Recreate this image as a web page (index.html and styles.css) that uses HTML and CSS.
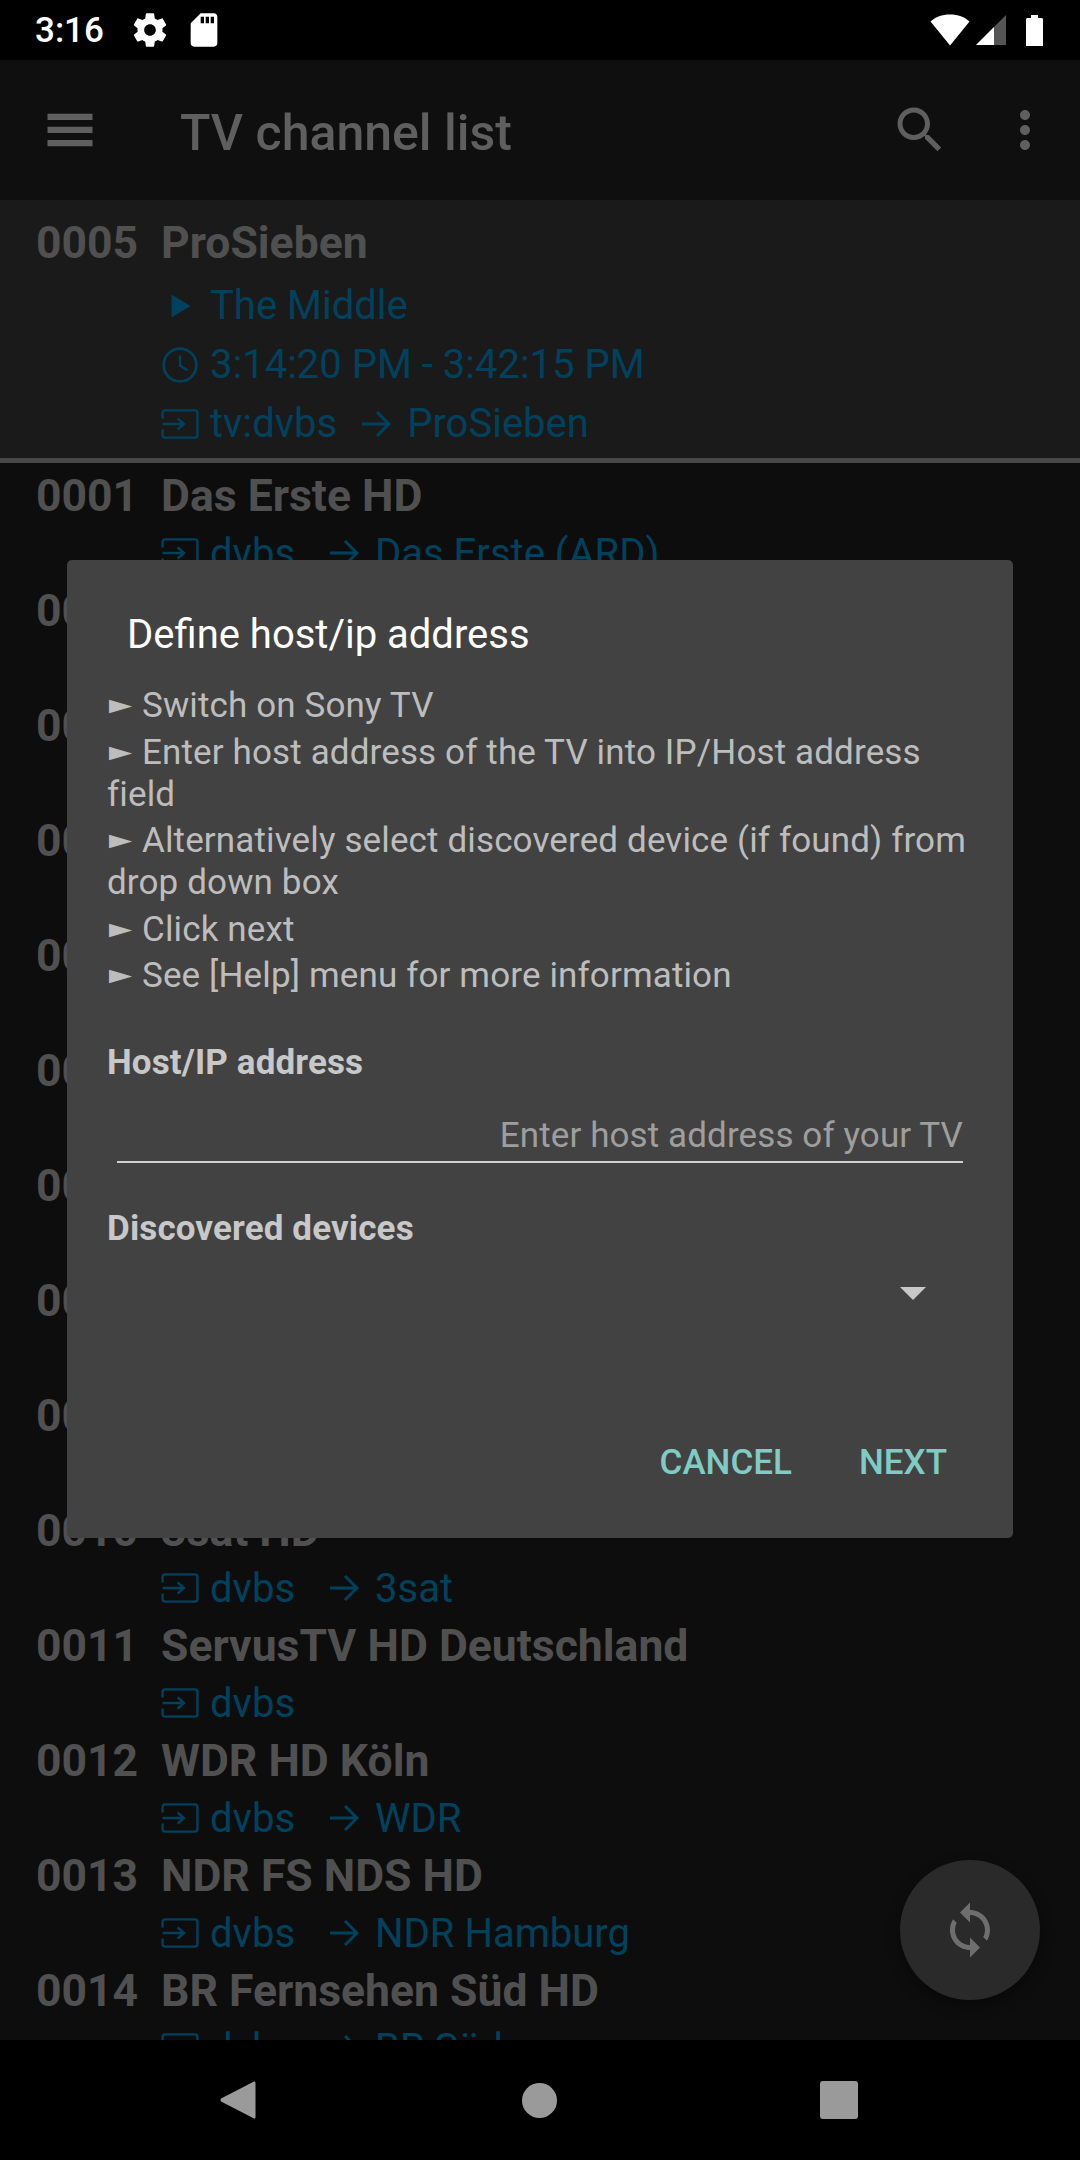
FILE: index.html
```html
<!DOCTYPE html>
<html>
<head>
    <title>TV channel list</title>
    <link rel="stylesheet" href="styles.css">
</head>
<body>
    <svg class="defs" width="0" height="0">
        <symbol id="input" viewBox="0 0 24 24">
            <path d="M1 8.5V5a1.6 1.6 0 0 1 1.6-1.6h18.8A1.6 1.6 0 0 1 23 5v14a1.6 1.6 0 0 1-1.6 1.6H2.600A1.600 1.600 0 0 1 1 19v-3.500M1 12h13.500M10.500 8.500l4 3.500-4 3.500" fill="none" stroke="currentColor" stroke-width="1.500"/>
        </symbol>
        <symbol id="arrow" viewBox="0 0 30 30">
            <path d="M1 15h27M16 3l12 12-12 12" fill="none" stroke="currentColor" stroke-width="3"/>
        </symbol>
    </svg>

    <div class="phone">
        <div class="statusbar">
            <span class="time">3:16</span>
            <svg class="st-icon gear" viewBox="0 0 24 24"><path fill="#fff" d="M19.430 12.980c.04-.32.07-.64.07-.98s-.03-.66-.07-.98l2.110-1.650c.19-.15.24-.42.12-.64l-2-3.460c-.12-.22-.39-.3-.61-.22l-2.490 1c-.52-.4-1.080-.73-1.690-.98l-.38-2.650C14.460 2.180 14.250 2 14 2h-4c-.25 0-.46.18-.49.42l-.38 2.650c-.61.25-1.170.59-1.690.98l-2.490-1c-.23-.09-.49 0-.61.22l-2 3.460c-.13.22-.07.49.12.64l2.110 1.650c-.04.32-.07.65-.07.98s.03.66.07.98l-2.110 1.650c-.19.15-.24.42-.12.64l2 3.460c.12.22.39.3.61.22l2.490-1c.52.4 1.080.73 1.690.98l.38 2.650c.03.24.24.42.49.42h4c.25 0 .46-.18.49-.42l.38-2.650c.61-.25 1.170-.59 1.690-.98l2.490 1c.23.09.49 0 .61-.22l2-3.460c.12-.22.07-.49-.12-.64l-2.110-1.650zM12 15.500c-1.930 0-3.500-1.570-3.500-3.500s1.570-3.500 3.500-3.500 3.500 1.570 3.500 3.500-1.570 3.500-3.500 3.500z"/></svg>
            <svg class="st-icon sd" viewBox="0 0 24 24"><path fill="#fff" d="M18 2h-8L4.020 8 4 20c0 1.100.9 2 2 2h12c1.100 0 2-.9 2-2V4c0-1.100-.9-2-2-2zm-6 6h-2V4h2v4zm3 0h-2V4h2v4zm3 0h-2V4h2v4z"/></svg>
            <div class="st-right">
                <svg class="wifi" viewBox="0 0 40 32"><path fill="#fff" d="M20 31.500 0.500 7.500C5.500 3 12 .5 20 .5s14.500 2.500 19.500 7z"/></svg>
                <svg class="signal" viewBox="0 0 30 30"><path fill="#555" d="M30 0v30H0z"/><path fill="#fff" d="M18 12v18H0z"/></svg>
                <svg class="battery" viewBox="0 0 17 31"><path fill="#fff" d="M5 0h7v3h3.500c.8 0 1.500.7 1.500 1.500V31H0V4.500C0 3.700.7 3 1.500 3H5z"/></svg>
            </div>
        </div>

        <div class="toolbar">
            <svg class="tb-icon" viewBox="0 0 24 24"><path d="M3 18.500h18v-2.500H3v2.500zm0-5.300h18v-2.500H3v2.500zm0-7.700v2.500h18V5.500H3z"/></svg>
            <span class="tb-title">TV channel list</span>
            <svg class="tb-icon tb-search" viewBox="0 0 24 24"><path d="M15.500 14h-.79l-.28-.27C15.410 12.590 16 11.110 16 9.500 16 5.910 13.090 3 9.500 3S3 5.910 3 9.500 5.910 16 9.500 16c1.610 0 3.090-.59 4.230-1.570l.27.28v.79l5 4.990L20.490 19l-4.990-5zm-6 0C7.010 14 5 11.990 5 9.500S7.010 5 9.500 5 14 7.010 14 9.500 11.990 14 9.500 14z"/></svg>
            <svg class="tb-icon tb-more" viewBox="0 0 24 24"><path d="M12 8c1.100 0 2-.9 2-2s-.9-2-2-2-2 .9-2 2 .9 2 2 2zm0 2c-1.100 0-2 .9-2 2s.9 2 2 2 2-.9 2-2-.9-2-2-2zm0 6c-1.100 0-2 .9-2 2s.9 2 2 2 2-.9 2-2-.9-2-2-2z"/></svg>
        </div>

        <div class="list">
            <div class="row row-current">
                <div class="row-title"><span class="num">0005</span><span>ProSieben</span></div>
                <div class="sub">
                    <svg class="sub-icon" viewBox="0 0 36 36"><path fill="currentColor" d="M10 7l18 11-18 11z"/></svg>
                    <span>The Middle</span>
                </div>
                <div class="sub">
                    <svg class="sub-icon" viewBox="0 0 36 36"><circle cx="18" cy="18" r="15.500" fill="none" stroke="currentColor" stroke-width="2.500"/><path d="M18 9v9.500l7 4.500" fill="none" stroke="currentColor" stroke-width="2.200"/></svg>
                    <span>3:14:20 PM - 3:42:15 PM</span>
                </div>
                <div class="sub">
                    <svg class="sub-icon"><use href="#input"/></svg>
                    <span>tv:dvbs</span>
                    <svg class="sub-arrow sub-arrow-near"><use href="#arrow"/></svg>
                    <span>ProSieben</span>
                </div>
            </div>

            <div class="row">
                <div class="row-title"><span class="num">0001</span><span>Das Erste HD</span></div>
                <div class="sub"><svg class="sub-icon"><use href="#input"/></svg><span>dvbs</span><svg class="sub-arrow"><use href="#arrow"/></svg><span>Das Erste (ARD)</span></div>
            </div>
            <div class="row">
                <div class="row-title"><span class="num">0002</span><span>ZDF HD</span></div>
                <div class="sub"><svg class="sub-icon"><use href="#input"/></svg><span>dvbs</span><svg class="sub-arrow"><use href="#arrow"/></svg><span>ZDF</span></div>
            </div>
            <div class="row">
                <div class="row-title"><span class="num">0003</span><span>RTL Television</span></div>
                <div class="sub"><svg class="sub-icon"><use href="#input"/></svg><span>dvbs</span><svg class="sub-arrow"><use href="#arrow"/></svg><span>RTL</span></div>
            </div>
            <div class="row">
                <div class="row-title"><span class="num">0004</span><span>SAT.1</span></div>
                <div class="sub"><svg class="sub-icon"><use href="#input"/></svg><span>dvbs</span><svg class="sub-arrow"><use href="#arrow"/></svg><span>SAT.1</span></div>
            </div>
            <div class="row">
                <div class="row-title"><span class="num">0005</span><span>ProSieben</span></div>
                <div class="sub"><svg class="sub-icon"><use href="#input"/></svg><span>dvbs</span><svg class="sub-arrow"><use href="#arrow"/></svg><span>ProSieben</span></div>
            </div>
            <div class="row">
                <div class="row-title"><span class="num">0006</span><span>VOX</span></div>
                <div class="sub"><svg class="sub-icon"><use href="#input"/></svg><span>dvbs</span><svg class="sub-arrow"><use href="#arrow"/></svg><span>VOX</span></div>
            </div>
            <div class="row">
                <div class="row-title"><span class="num">0007</span><span>kabel eins</span></div>
                <div class="sub"><svg class="sub-icon"><use href="#input"/></svg><span>dvbs</span><svg class="sub-arrow"><use href="#arrow"/></svg><span>kabel eins</span></div>
            </div>
            <div class="row">
                <div class="row-title"><span class="num">0008</span><span>arte HD</span></div>
                <div class="sub"><svg class="sub-icon"><use href="#input"/></svg><span>dvbs</span><svg class="sub-arrow"><use href="#arrow"/></svg><span>arte</span></div>
            </div>
            <div class="row">
                <div class="row-title"><span class="num">0009</span><span>phoenix HD</span></div>
                <div class="sub"><svg class="sub-icon"><use href="#input"/></svg><span>dvbs</span><svg class="sub-arrow"><use href="#arrow"/></svg><span>phoenix</span></div>
            </div>
            <div class="row">
                <div class="row-title"><span class="num">0010</span><span>3sat HD</span></div>
                <div class="sub"><svg class="sub-icon"><use href="#input"/></svg><span>dvbs</span><svg class="sub-arrow"><use href="#arrow"/></svg><span>3sat</span></div>
            </div>
            <div class="row">
                <div class="row-title"><span class="num">0011</span><span>ServusTV HD Deutschland</span></div>
                <div class="sub"><svg class="sub-icon"><use href="#input"/></svg><span>dvbs</span></div>
            </div>
            <div class="row">
                <div class="row-title"><span class="num">0012</span><span>WDR HD Köln</span></div>
                <div class="sub"><svg class="sub-icon"><use href="#input"/></svg><span>dvbs</span><svg class="sub-arrow"><use href="#arrow"/></svg><span>WDR</span></div>
            </div>
            <div class="row">
                <div class="row-title"><span class="num">0013</span><span>NDR FS NDS HD</span></div>
                <div class="sub"><svg class="sub-icon"><use href="#input"/></svg><span>dvbs</span><svg class="sub-arrow"><use href="#arrow"/></svg><span>NDR Hamburg</span></div>
            </div>
            <div class="row">
                <div class="row-title"><span class="num">0014</span><span>BR Fernsehen Süd HD</span></div>
                <div class="sub"><svg class="sub-icon"><use href="#input"/></svg><span>dvbs</span><svg class="sub-arrow"><use href="#arrow"/></svg><span>BR Süd</span></div>
            </div>

            <div class="fab">
                <svg viewBox="0 0 24 24"><path fill="#6e6e6e" d="M12 4V1L8 5l4 4V6c3.310 0 6 2.690 6 6 0 1.010-.25 1.970-.7 2.800l1.460 1.460C19.540 15.030 20 13.570 20 12c0-4.420-3.580-8-8-8zm0 14c-3.310 0-6-2.690-6-6 0-1.010.25-1.970.7-2.800L5.240 7.740C4.460 8.970 4 10.430 4 12c0 4.420 3.580 8 8 8v3l4-4-4-4v3z"/></svg>
            </div>
        </div>

        <div class="navbar">
            <svg class="nav-back" viewBox="0 0 36 40"><path d="M34 1.500c1 0 1.500.6 1.500 1.500v34c0 1-.5 1.500-1.500 1.500-.5 0-1-.3-1.400-.8L1 21.500c-.7-.9-.7-2.100 0-3L32.600 2.300c.4-.5.9-.8 1.400-.8z"/></svg>
            <span class="nav-home"></span>
            <span class="nav-recent"></span>
        </div>

        <div class="dialog">
            <h2 class="dlg-title">Define host/ip address</h2>
            <div class="dlg-text">
                <p><span class="bullet">►</span>Switch on Sony TV</p>
                <p><span class="bullet">►</span>Enter host address of the TV into IP/Host address field</p>
                <p><span class="bullet">►</span>Alternatively select discovered device (if found) from drop down box</p>
                <p><span class="bullet">►</span>Click next</p>
                <p><span class="bullet">►</span>See [Help] menu for more information</p>
            </div>
            <div class="dlg-label">Host/IP address</div>
            <div class="dlg-input">Enter host address of your TV</div>
            <div class="dlg-label dlg-label-2">Discovered devices</div>
            <div class="dlg-spinner"><span class="caret"></span></div>
            <div class="dlg-buttons">
                <span>CANCEL</span>
                <span>NEXT</span>
            </div>
        </div>
    </div>
</body>
</html>
```

FILE: styles.css
```css
body {
    margin: 0;
    background: #000;
    font-family: Roboto, "Liberation Sans", sans-serif;
}

.defs {
    position: absolute;
}

.phone {
    position: relative;
    width: 1080px;
    height: 2160px;
    display: flex;
    flex-direction: column;
    overflow: hidden;
    background: #0d0d0d;
}

/* status bar */
.statusbar {
    height: 60px;
    flex: none;
    display: flex;
    align-items: center;
    background: #000;
    padding: 0 37px 0 35px;
    box-sizing: border-box;
}

.time {
    color: #fff;
    font-size: 35px;
    font-weight: 500;
    width: 95px;
}

.st-icon {
    width: 40px;
    height: 40px;
}

.sd {
    margin-left: 14px;
}

.st-right {
    margin-left: auto;
    display: flex;
    align-items: center;
    gap: 6px;
}

.wifi {
    width: 40px;
    height: 32px;
}

.signal {
    width: 30px;
    height: 30px;
}

.battery {
    width: 17px;
    height: 31px;
    margin-left: 14px;
}

/* toolbar */
.toolbar {
    height: 140px;
    flex: none;
    display: flex;
    align-items: center;
    background: #0f0f0f;
    padding: 0 25px 0 40px;
    box-sizing: border-box;
}

.tb-icon {
    width: 60px;
    height: 60px;
    fill: #5f5f5f;
}

.tb-title {
    color: #5f5f5f;
    font-size: 50px;
    font-weight: 500;
    margin-left: 80px;
    padding-top: 5px;
}

.tb-search {
    margin-left: auto;
    margin-right: 45px;
}

/* channel list */
.list {
    position: relative;
    flex: 1;
    min-height: 0;
    overflow: hidden;
    color: #00425e;
}

.row {
    height: 115px;
    padding: 5px 0 0 36px;
    box-sizing: border-box;
}

.row-current {
    height: 263px;
    padding-top: 15px;
    background: #1a1a1a;
    border-bottom: 5px solid #484848;
}

.row-title {
    display: flex;
    height: 60px;
    line-height: 56px;
    color: #505050;
    font-size: 44.500px;
    font-weight: 700;
}

.row-current .row-title {
    height: 61px;
}

.num {
    width: 125px;
}

.sub {
    display: flex;
    align-items: center;
    height: 50px;
    margin-left: 125px;
    font-size: 40px;
}

.row-current .sub {
    height: 59px;
}

.sub-icon {
    width: 38px;
    height: 38px;
    margin: 0 11px 0 0;
    flex: none;
}

.sub-arrow {
    width: 30px;
    height: 30px;
    margin: 0 16px 0 34px;
    flex: none;
}

.sub-arrow-near {
    margin-left: 24px;
}

.fab {
    position: absolute;
    right: 40px;
    bottom: 40px;
    width: 140px;
    height: 140px;
    border-radius: 50%;
    background: #2a2a2a;
    box-shadow: 0 6px 14px rgba(0, 0, 0, 0.35);
    display: flex;
    align-items: center;
    justify-content: center;
}

.fab svg {
    width: 60px;
    height: 60px;
}

/* nav bar */
.navbar {
    position: relative;
    height: 120px;
    flex: none;
    background: #000;
    display: flex;
    align-items: center;
    padding-left: 220px;
    box-sizing: border-box;
}

.nav-back {
    width: 36px;
    height: 40px;
    fill: #9a9a9a;
}

.nav-home {
    width: 35px;
    height: 35px;
    margin-left: 266px;
    border-radius: 50%;
    background: #9a9a9a;
}

.nav-recent {
    width: 38px;
    height: 38px;
    margin-left: 263px;
    border-radius: 3px;
    background: #9a9a9a;
}

/* dialog */
.dialog {
    position: absolute;
    left: 67px;
    top: 560px;
    width: 946px;
    height: 978px;
    background: #424242;
    border-radius: 5px;
    box-sizing: border-box;
    padding: 50px 40px 0;
}

.dlg-title {
    margin: 0 0 0 20px;
    color: #fff;
    font-size: 40px;
    font-weight: 400;
    line-height: 50px;
}

.dlg-text {
    margin-top: 25px;
    color: #bdbdbd;
    font-size: 35px;
    line-height: 42px;
    letter-spacing: 0.13px;
}

.dlg-text p {
    margin: 0 0 4.500px;
}

.bullet {
    display: inline-block;
    width: 35px;
    text-indent: -5px;
    transform: scale(1.1, 0.65);
    transform-origin: left center;
}

.dlg-label {
    margin-top: 45px;
    color: #c8c8c8;
    font-size: 35px;
    font-weight: 700;
    line-height: 42px;
    letter-spacing: 0.13px;
}

.dlg-label-2 {
    margin-top: 45px;
}

.dlg-input {
    margin: 30px 10px 0 10px;
    padding-bottom: 3px;
    border-bottom: 2px solid #d0d0d0;
    color: #9e9e9e;
    font-size: 35px;
    line-height: 44px;
    letter-spacing: 0.1px;
    text-align: right;
}

.dlg-spinner {
    display: flex;
    justify-content: flex-end;
    padding: 37px 47px 0 0;
}

.caret {
    width: 0;
    height: 0;
    border-left: 13px solid transparent;
    border-right: 13px solid transparent;
    border-top: 13px solid #c8c8c8;
}

.dlg-buttons {
    display: flex;
    justify-content: flex-end;
    gap: 67px;
    margin-top: 141px;
    padding-right: 26px;
    color: #80cbc4;
    font-size: 35px;
    font-weight: 500;
    line-height: 44px;
}
```
